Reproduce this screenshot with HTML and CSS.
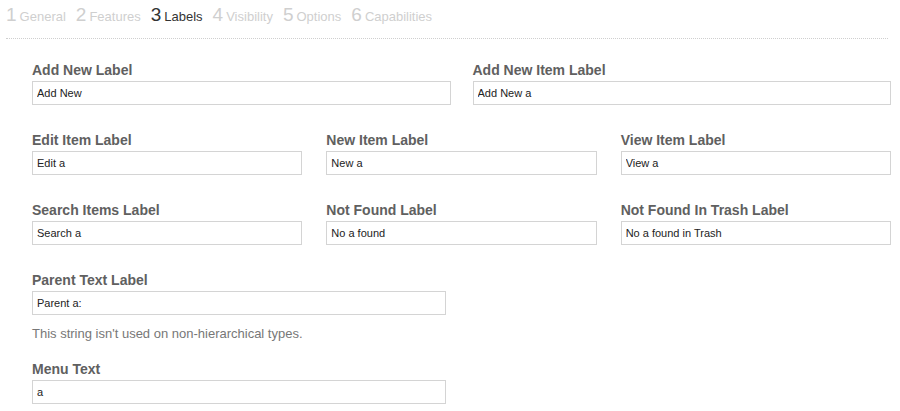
FILE: index.html
```html
<!DOCTYPE html>
<html>
<head>
<meta charset="utf-8">
<link rel="stylesheet" href="styles.css">
</head>
<body>
<nav class="steps">
  <span class="step"><span class="num">1</span>General</span>
  <span class="step"><span class="num">2</span>Features</span>
  <span class="step active"><span class="num">3</span>Labels</span>
  <span class="step"><span class="num">4</span>Visibility</span>
  <span class="step"><span class="num">5</span>Options</span>
  <span class="step"><span class="num">6</span>Capabilities</span>
</nav>
<main class="form">
  <div class="row two">
    <div class="field"><label>Add New Label</label><input type="text" value="Add New"></div>
    <div class="field"><label>Add New Item Label</label><input type="text" value="Add New a"></div>
  </div>
  <div class="row three">
    <div class="field"><label>Edit Item Label</label><input type="text" value="Edit a"></div>
    <div class="field"><label>New Item Label</label><input type="text" value="New a"></div>
    <div class="field"><label>View Item Label</label><input type="text" value="View a"></div>
  </div>
  <div class="row three">
    <div class="field"><label>Search Items Label</label><input type="text" value="Search a"></div>
    <div class="field"><label>Not Found Label</label><input type="text" value="No a found"></div>
    <div class="field"><label>Not Found In Trash Label</label><input type="text" value="No a found in Trash"></div>
  </div>
  <div class="row single">
    <div class="field"><label>Parent Text Label</label><input type="text" value="Parent a:"><p class="help">This string isn't used on non-hierarchical types.</p></div>
  </div>
  <div class="row single">
    <div class="field"><label>Menu Text</label><input type="text" value="a"></div>
  </div>
</main>
</body>
</html>
```
FILE: styles.css
```css
html, body {
  margin: 0;
  padding: 0;
  background: #fff;
  font-family: "Liberation Sans", Arial, sans-serif;
}
.steps {
  margin: 0 12px 0 6px;
  height: 39px;
  border-bottom: 1px dotted #cfcfcf;
  display: flex;
  align-items: flex-start;
  gap: 10px;
  box-sizing: border-box;
  padding-top: 4px;
}
.step {
  color: #cfcfcf;
  font-size: 13px;
  display: flex;
  align-items: baseline;
  line-height: 22px;
}
.step .num {
  font-size: 19px;
  margin-right: 3px;
}
.step.active {
  color: #333;
}
.form {
  padding: 23px 9px 0 32px;
}
.row {
  display: grid;
  margin-bottom: 27px;
}
.row.two {
  grid-template-columns: 1fr 1fr;
  column-gap: 22px;
}
.row.three {
  grid-template-columns: 1fr 1fr 1fr;
  column-gap: 24px;
}
.row.single {
  grid-template-columns: 414px;
  margin-bottom: 19px;
}
.field label {
  display: block;
  font-size: 14px;
  font-weight: bold;
  color: #606060;
  line-height: 16px;
  margin-bottom: 3px;
}
.field input {
  display: block;
  width: 100%;
  box-sizing: border-box;
  height: 24px;
  border: 1px solid #d4d4d4;
  padding: 0 4px;
  font-family: "Liberation Sans", Arial, sans-serif;
  font-size: 11px;
  color: #222;
  background: #fff;
  margin: 0;
  outline: none;
}
.help {
  margin: 11px 0 0;
  font-size: 13px;
  color: #777;
  line-height: 16px;
}
```
